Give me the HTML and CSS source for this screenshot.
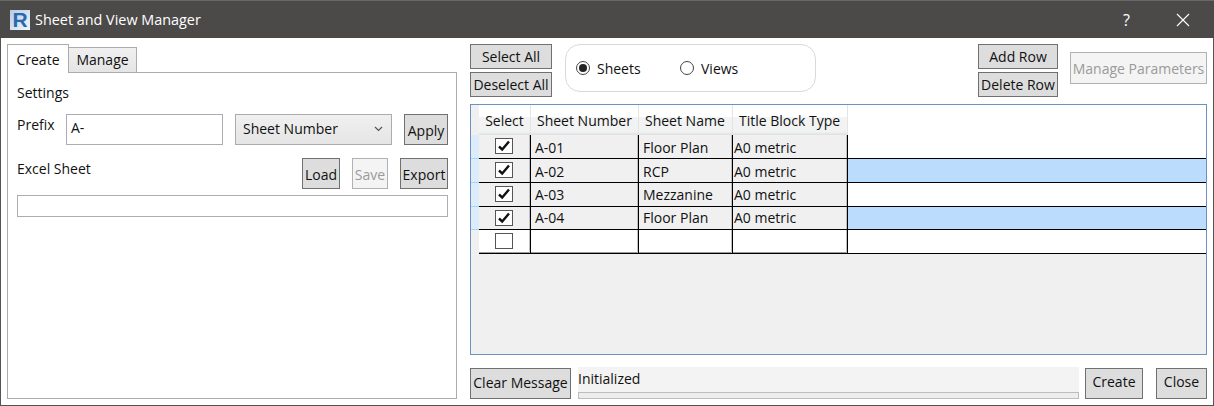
FILE: index.html
```html
<!DOCTYPE html>
<html lang="en">
  <head>
    <meta charset="UTF-8" />
    <meta name="viewport" content="width=device-width, initial-scale=1.0" />
    <title>Sheet and View Manager</title>
    <link rel="stylesheet" href="styles.css">
  </head>
  <body>
    <div class="window">
      <header class="titlebar">
        <span class="app-icon">R</span>
        <span class="title">Sheet and View Manager</span>
        <span class="help">?</span>
        <svg class="close-x" width="14" height="14" viewBox="0 0 14 14">
          <path d="M1 1 L13 13 M13 1 L1 13" stroke="#fff" stroke-width="1.1" fill="none" />
        </svg>
      </header>

      <main class="content">
        <section class="left">
          <div class="tabs">
            <div class="tab active">Create</div>
            <div class="tab">Manage</div>
          </div>
          <div class="tab-panel">
            <div class="settings-label">Settings</div>
            <div class="prefix-row">
              <span class="prefix-label">Prefix</span>
              <div class="textbox prefix-input">A-</div>
              <div class="combo">
                <span>Sheet Number</span>
                <svg width="9" height="6" viewBox="0 0 9 6">
                  <path d="M1 1 L4.5 4.5 L8 1" stroke="#555" stroke-width="1.2" fill="none" />
                </svg>
              </div>
              <button class="btn apply-btn">Apply</button>
            </div>
            <div class="excel-row">
              <span class="excel-label">Excel Sheet</span>
              <button class="btn load-btn">Load</button>
              <button class="btn save-btn" disabled>Save</button>
              <button class="btn export-btn">Export</button>
            </div>
            <div class="textbox path-input"></div>
          </div>
        </section>

        <section class="right">
          <div class="toolbar">
            <div class="btn-stack">
              <button class="btn stack-btn">Select All</button>
              <button class="btn stack-btn">Deselect All</button>
            </div>
            <div class="radio-group">
              <span class="radio checked"></span>
              <span class="radio-label sheets-label">Sheets</span>
              <span class="radio"></span>
              <span class="radio-label">Views</span>
            </div>
            <div class="btn-stack rows-stack">
              <button class="btn stack-btn">Add Row</button>
              <button class="btn stack-btn">Delete Row</button>
            </div>
            <button class="btn params-btn" disabled>Manage Parameters</button>
          </div>

          <div class="grid">
            <div class="grid-head">
              <div class="row-head"></div>
              <div class="head-cell col-select center">Select</div>
              <div class="head-cell col-number">Sheet Number</div>
              <div class="head-cell col-name">Sheet Name</div>
              <div class="head-cell col-type">Title Block Type</div>
              <div class="head-cell col-fill"></div>
            </div>
            <div class="grid-row low">
              <div class="row-head"></div>
              <div class="cell col-select center"><span class="check on"><svg width="14" height="12" viewBox="0 0 14 12"><path d="M2 6.5 L5.2 9.5 L12 1.5" stroke="#111" stroke-width="2.4" fill="none" /></svg></span></div>
              <div class="cell col-number">A-01</div>
              <div class="cell col-name">Floor Plan</div>
              <div class="cell col-type">A0 metric</div>
              <div class="cell col-fill"></div>
            </div>
            <div class="grid-row alt low">
              <div class="row-head"></div>
              <div class="cell col-select center"><span class="check on"><svg width="14" height="12" viewBox="0 0 14 12"><path d="M2 6.5 L5.2 9.5 L12 1.5" stroke="#111" stroke-width="2.4" fill="none" /></svg></span></div>
              <div class="cell col-number">A-02</div>
              <div class="cell col-name">RCP</div>
              <div class="cell col-type">A0 metric</div>
              <div class="cell col-fill"></div>
            </div>
            <div class="grid-row">
              <div class="row-head"></div>
              <div class="cell col-select center"><span class="check on"><svg width="14" height="12" viewBox="0 0 14 12"><path d="M2 6.5 L5.2 9.5 L12 1.5" stroke="#111" stroke-width="2.4" fill="none" /></svg></span></div>
              <div class="cell col-number">A-03</div>
              <div class="cell col-name">Mezzanine</div>
              <div class="cell col-type">A0 metric</div>
              <div class="cell col-fill"></div>
            </div>
            <div class="grid-row alt short">
              <div class="row-head"></div>
              <div class="cell col-select center"><span class="check on"><svg width="14" height="12" viewBox="0 0 14 12"><path d="M2 6.5 L5.2 9.5 L12 1.5" stroke="#111" stroke-width="2.4" fill="none" /></svg></span></div>
              <div class="cell col-number">A-04</div>
              <div class="cell col-name">Floor Plan</div>
              <div class="cell col-type">A0 metric</div>
              <div class="cell col-fill"></div>
            </div>
            <div class="grid-row empty">
              <div class="row-head"></div>
              <div class="cell col-select center"><span class="check"></span></div>
              <div class="cell col-number"></div>
              <div class="cell col-name"></div>
              <div class="cell col-type"></div>
              <div class="cell col-fill"></div>
            </div>
          </div>

          <div class="footer">
            <button class="btn clear-btn">Clear Message</button>
            <div class="status">
              <div class="status-text">Initialized</div>
              <div class="progress"></div>
            </div>
            <button class="btn create-btn">Create</button>
            <button class="btn close-btn">Close</button>
          </div>
        </section>
      </main>
    </div>
  </body>
</html>
```

FILE: styles.css
```css
* {
  box-sizing: border-box;
}

html,
body {
  margin: 0;
  padding: 0;
  height: 100%;
}

body {
  font-family: "Open Sans", "Noto Sans", sans-serif;
  font-size: 14px;
  color: #111;
  background: #fff;
}

.window {
  display: flex;
  flex-direction: column;
  height: 406px;
  border: 1px solid #55534f;
  border-top: 0;
  background: #fff;
}

.titlebar {
  display: flex;
  align-items: center;
  height: 38px;
  flex-shrink: 0;
  margin: 0 -1px;
  padding-left: 10px;
  background: #4c4a48;
  border-top: 1px solid #6a6866;
  color: #fff;
}

.app-icon {
  width: 20px;
  height: 20px;
  background: linear-gradient(135deg, #b4cbe6, #f2f6fb);
  color: #2a6aac;
  font-family: "Liberation Sans", sans-serif;
  font-size: 21px;
  font-weight: bold;
  line-height: 20px;
  text-align: center;
}

.title {
  margin-left: 5px;
  font-size: 14.4px;
}

.help {
  margin-left: auto;
  margin-right: 46px;
  font-size: 16px;
}

.close-x {
  margin-right: 24px;
}

.content {
  flex: 1;
  display: flex;
  padding: 6px;
}

/* left side */
.left {
  width: 450px;
  flex-shrink: 0;
  display: flex;
  flex-direction: column;
}

.tabs {
  display: flex;
  align-items: flex-end;
  height: 28px;
  position: relative;
  z-index: 1;
}

.tab {
  height: 25px;
  width: 68px;
  padding-top: 2px;
  text-align: center;
  background: linear-gradient(#f0f0f0, #e5e5e5);
  border: 1px solid #acacac;
  border-bottom: 0;
  border-left: 0;
}

.tab.active {
  width: 62px;
  height: 29px;
  padding-top: 5px;
  margin-bottom: -1px;
  background: #fff;
  border-left: 1px solid #acacac;
}

.tab-panel {
  flex: 1;
  border: 1px solid #acacac;
  padding: 9px 8px 0 9px;
}

.settings-label {
  height: 21px;
  line-height: 21px;
}

.prefix-row {
  display: flex;
  margin-top: 11px;
  height: 31px;
}

.prefix-label {
  width: 49px;
  padding-top: 1px;
}

.textbox {
  border: 1px solid #abadb3;
  background: #fff;
}

.prefix-input {
  width: 157px;
  padding: 3px 4px;
}

.combo {
  display: flex;
  align-items: center;
  justify-content: space-between;
  width: 157px;
  margin-left: 12px;
  padding: 0 8px 2px 7px;
  border: 1px solid #acacac;
  background: linear-gradient(#f0f0f0, #e5e5e5);
}

.btn {
  display: block;
  padding: 0;
  font: inherit;
  color: #111;
  background: #dddddd;
  border: 1px solid #707070;
  border-radius: 0;
  white-space: nowrap;
}

.btn:disabled {
  color: #9a9a9a;
  background: #f4f4f4;
  border-color: #adb2b5;
}

.apply-btn {
  width: 44px;
  margin-left: 12px;
  padding-top: 1px;
}

.excel-row {
  display: flex;
  height: 31px;
  margin-top: 13px;
}

.excel-label {
  flex: 1;
  line-height: 22px;
}

.load-btn,
.save-btn,
.export-btn {
  padding-top: 2px;
}

.load-btn {
  width: 38px;
}

.save-btn {
  width: 36px;
  margin-left: 12px;
}

.export-btn {
  width: 48px;
  margin-left: 12px;
}

.path-input {
  height: 22px;
  margin-top: 6px;
}

/* right side */
.right {
  flex: 1;
  margin-left: 13px;
  display: flex;
  flex-direction: column;
}

.toolbar {
  display: flex;
  height: 60px;
}

.btn-stack {
  display: flex;
  flex-direction: column;
  gap: 3px;
  width: 82px;
  flex-shrink: 0;
}

.stack-btn {
  width: 100%;
  height: 25px;
  padding-bottom: 1px;
}

.radio-group {
  display: flex;
  align-items: center;
  width: 251px;
  height: 48px;
  margin-left: 13px;
  padding-left: 10px;
  border: 1px solid #d9d9d9;
  border-radius: 15px;
}

.radio {
  width: 14px;
  height: 14px;
  border: 1px solid #444;
  border-radius: 50%;
  position: relative;
}

.radio.checked::after {
  content: "";
  position: absolute;
  top: 2px;
  left: 2px;
  width: 8px;
  height: 8px;
  border-radius: 50%;
  background: #222;
}

.radio-label {
  margin-left: 7px;
}

.sheets-label {
  width: 83px;
}

.rows-stack {
  width: 80px;
  margin-left: 162px;
}

.params-btn {
  width: 137px;
  height: 32px;
  margin-top: 8px;
  margin-left: 12px;
}

.grid {
  height: 251px;
  flex-shrink: 0;
  border: 1px solid #6b93bf;
  background: #f0f0f0;
}

.grid-head {
  display: flex;
  height: 30px;
  background: linear-gradient(#ffffff 0, #ffffff 40%, #f3f3f3 41%, #f1f2f3 90%, #dedede 100%);
}

.grid-row {
  display: flex;
  height: 24px;
  border-bottom: 1px solid #000;
  box-shadow: inset 0 -1px 0 #9a9a9a;
}

.grid-row.short {
  height: 23px;
}

.grid-row.empty {
  background: #fff;
}

.row-head {
  width: 8px;
  flex-shrink: 0;
  background: #f0f0f0;
}

.grid-row .row-head {
  background: #dcecfa;
  margin-bottom: -1px;
  border-bottom: 1px solid #a5d3f5;
}

.grid-row.empty .row-head {
  background: #f0f0f0;
  border-bottom: 0;
}

.head-cell {
  padding: 6px 0 0 6px;
  border-right: 1px solid #e4e4e4;
  white-space: nowrap;
}

.cell {
  padding: 2px 0 0 4px;
  border-right: 1px solid #000;
  box-shadow: inset -1px 0 0 #c0c0c0;
  white-space: nowrap;
}

.grid-row.low .cell {
  padding-top: 3px;
}

.grid-row.short .cell {
  padding-top: 1px;
}

.grid-row .col-type {
  padding-left: 1px;
}

.col-select {
  width: 52px;
}

.col-number {
  width: 108px;
}

.col-name {
  width: 94px;
}

.col-type {
  width: 115px;
}

.col-fill {
  flex: 1;
  border-right: 0;
  background: #fff;
}

.cell.col-fill {
  box-shadow: none;
}

.grid-row.alt .col-fill {
  background: #bbdcfc;
}

.grid-row:not(.empty) .cell:not(.col-fill) {
  background: #f0f0f0;
}

.center {
  padding-left: 0;
  text-align: center;
}

.grid-row .cell.center {
  display: flex;
  justify-content: center;
  align-items: center;
  padding: 0 2px 1px 0;
}

.check {
  display: flex;
  align-items: center;
  justify-content: center;
  width: 18px;
  height: 16px;
  border: 1px solid #555;
  background: #fff;
}

.footer {
  display: flex;
  align-items: flex-end;
  margin-top: 12px;
  height: 32px;
}

.clear-btn {
  width: 101px;
  height: 31px;
  padding-bottom: 3px;
}

.status {
  width: 501px;
  height: 32px;
  margin-left: 7px;
  background: #f3f3f3;
  display: flex;
  flex-direction: column;
  justify-content: space-between;
}

.status-text {
  line-height: 24px;
}

.progress {
  height: 7px;
  background: #ededed;
  border: 1px solid #bcbcbc;
}

.create-btn {
  width: 58px;
  height: 31px;
  margin-left: 6px;
  padding-bottom: 5px;
}

.close-btn {
  width: 51px;
  height: 31px;
  margin-left: 13px;
  padding-bottom: 5px;
}
```
